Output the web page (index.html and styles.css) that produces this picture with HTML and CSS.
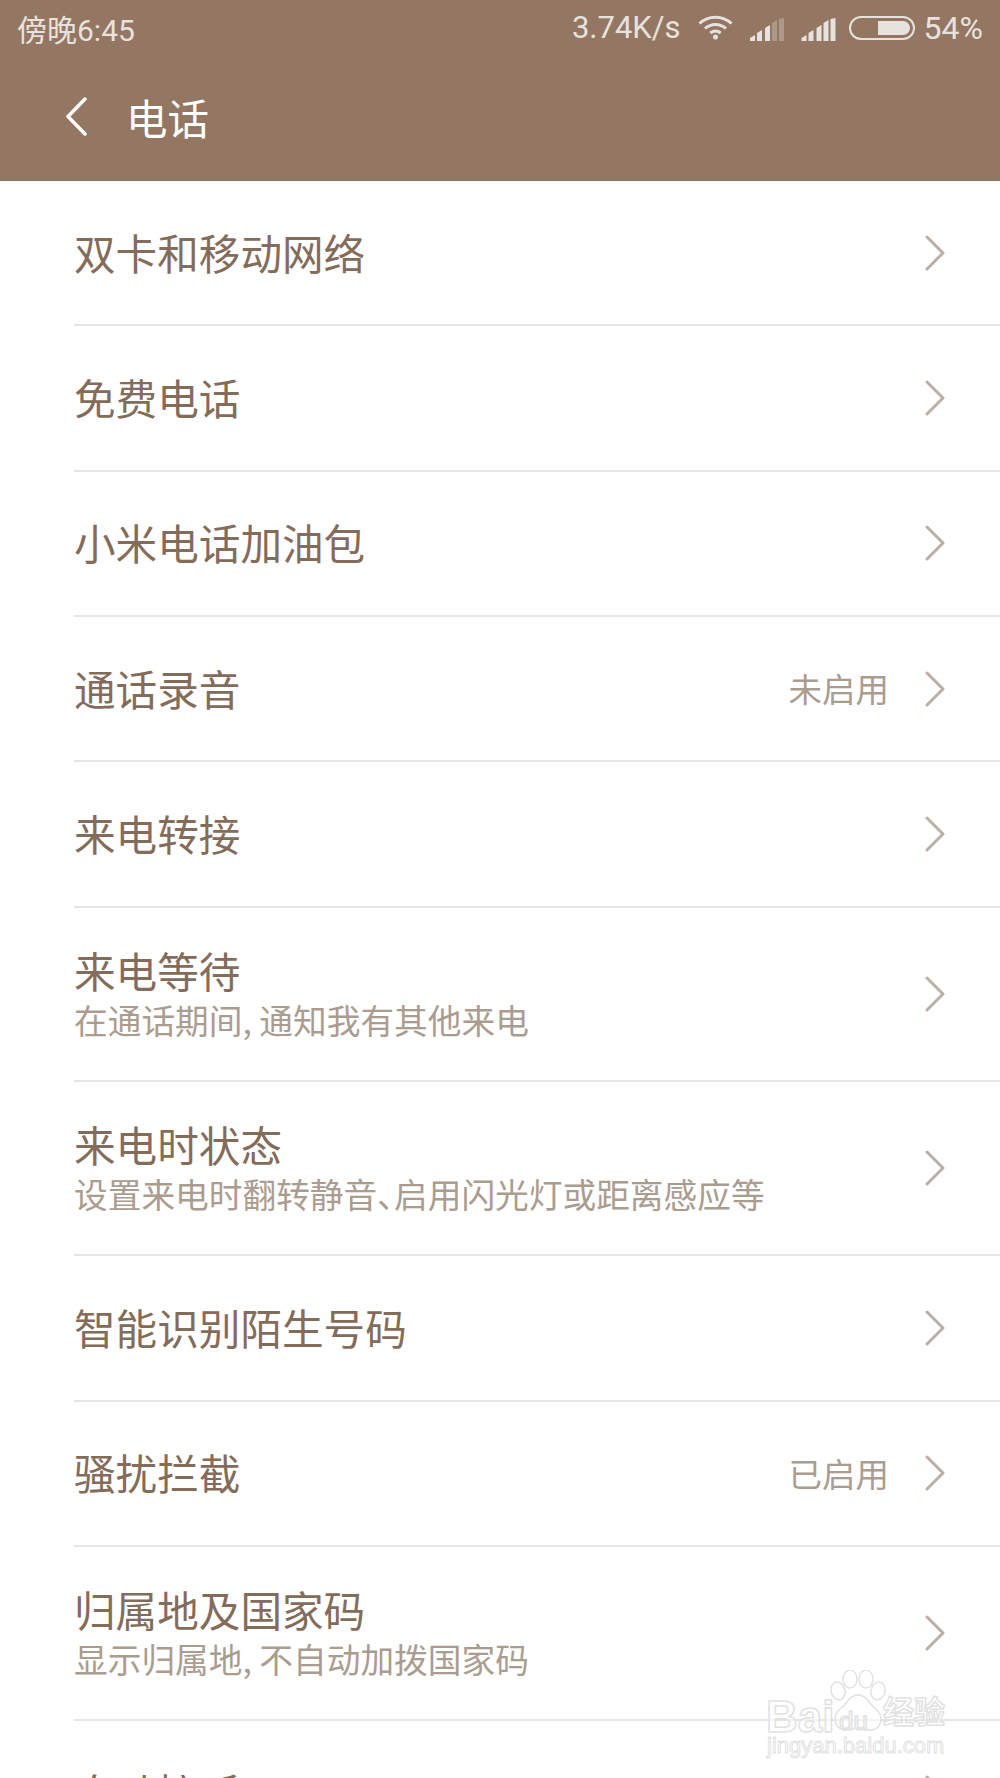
FILE: index.html
```html
<!DOCTYPE html>
<html lang="zh-CN">
<head>
    <meta charset="UTF-8">
    <title>电话</title>
    <link rel="stylesheet" href="styles.css">
</head>
<body>

<div class="screen">
    <header class="app-header">
        <div class="status-bar">
            <span class="clock">傍晚6:45</span>
            <div class="status-right">
                <span class="speed">3.74K/s</span>
                <svg class="wifi" width="35" height="25" viewBox="0 0 35 25" fill="none" stroke="#e8e2de" stroke-width="3">
                    <path d="M1.5 8.5C10.5 0 24.500 0 33.500 8.500"/>
                    <path d="M7 13.500C13 8 22 8 28 13.500"/>
                    <path d="M12.300 18C15.500 15.500 19.500 15.500 22.700 18"/>
                    <circle cx="17.500" cy="22" r="2.500" fill="#e8e2de" stroke="none"/>
                </svg>
                <svg class="signal" width="34" height="23" viewBox="0 0 34 23" fill="#e8e2de">
                    <path d="M0 23V20L5 17V23Z"/>
                    <path d="M7 23V15L12 12V23Z"/>
                    <path d="M15 23V10L20 7V23Z"/>
                    <path d="M22 23V5L27 2V23Z" opacity=".3"/>
                    <path d="M29 23V1L34 0V23Z" opacity=".3"/>
                </svg>
                <svg class="signal signal-full" width="35" height="23" viewBox="0 0 34 23" fill="#e8e2de">
                    <path d="M0 23V20L5 17V23Z"/>
                    <path d="M7 23V15L12 12V23Z"/>
                    <path d="M15 23V10L20 7V23Z"/>
                    <path d="M22 23V5L27 2V23Z"/>
                    <path d="M29 23V1L34 0V23Z"/>
                </svg>
                <div class="battery"><div class="battery-level"></div></div>
                <span class="percent">54%</span>
            </div>
        </div>
        <div class="title-bar">
            <svg class="back" width="22" height="39" viewBox="0 0 22 39" fill="none" stroke="#fff" stroke-width="3.500" stroke-linecap="round" stroke-linejoin="round">
                <path d="M20 2L3 19.500L20 37"/>
            </svg>
            <h1>电话</h1>
        </div>
    </header>

    <ul class="settings">
        <li class="row">
            <div class="row-text"><div class="row-title">双卡和移动网络</div></div>
            <svg class="chevron" width="20" height="36" viewBox="0 0 20 36"><path d="M2 2L18 18L2 34"/></svg>
        </li>
        <li class="row">
            <div class="row-text"><div class="row-title">免费电话</div></div>
            <svg class="chevron" width="20" height="36" viewBox="0 0 20 36"><path d="M2 2L18 18L2 34"/></svg>
        </li>
        <li class="row">
            <div class="row-text"><div class="row-title">小米电话加油包</div></div>
            <svg class="chevron" width="20" height="36" viewBox="0 0 20 36"><path d="M2 2L18 18L2 34"/></svg>
        </li>
        <li class="row">
            <div class="row-text"><div class="row-title">通话录音</div></div>
            <span class="row-value">未启用</span>
            <svg class="chevron" width="20" height="36" viewBox="0 0 20 36"><path d="M2 2L18 18L2 34"/></svg>
        </li>
        <li class="row">
            <div class="row-text"><div class="row-title">来电转接</div></div>
            <svg class="chevron" width="20" height="36" viewBox="0 0 20 36"><path d="M2 2L18 18L2 34"/></svg>
        </li>
        <li class="row row-tall">
            <div class="row-text">
                <div class="row-title">来电等待</div>
                <div class="row-sub">在通话期间, 通知我有其他来电</div>
            </div>
            <svg class="chevron" width="20" height="36" viewBox="0 0 20 36"><path d="M2 2L18 18L2 34"/></svg>
        </li>
        <li class="row row-tall">
            <div class="row-text">
                <div class="row-title">来电时状态</div>
                <div class="row-sub">设置来电时翻转静音、启用闪光灯或距离感应等</div>
            </div>
            <svg class="chevron" width="20" height="36" viewBox="0 0 20 36"><path d="M2 2L18 18L2 34"/></svg>
        </li>
        <li class="row">
            <div class="row-text"><div class="row-title">智能识别陌生号码</div></div>
            <svg class="chevron" width="20" height="36" viewBox="0 0 20 36"><path d="M2 2L18 18L2 34"/></svg>
        </li>
        <li class="row">
            <div class="row-text"><div class="row-title">骚扰拦截</div></div>
            <span class="row-value">已启用</span>
            <svg class="chevron" width="20" height="36" viewBox="0 0 20 36"><path d="M2 2L18 18L2 34"/></svg>
        </li>
        <li class="row row-tall">
            <div class="row-text">
                <div class="row-title">归属地及国家码</div>
                <div class="row-sub">显示归属地, 不自动加拨国家码</div>
            </div>
            <svg class="chevron" width="20" height="36" viewBox="0 0 20 36"><path d="M2 2L18 18L2 34"/></svg>
        </li>
        <li class="row">
            <div class="row-text"><div class="row-title">自动接听</div></div>
            <svg class="chevron" width="20" height="36" viewBox="0 0 20 36"><path d="M2 2L18 18L2 34"/></svg>
        </li>
    </ul>

    <div class="watermark">
        <span class="wm-bai">Bai</span>
        <svg class="wm-paw" width="58" height="62" viewBox="0 0 58 62" fill="#fff" fill-opacity=".5" stroke="#e2e2e2" stroke-width="1.500">
            <ellipse cx="9" cy="21" rx="7" ry="9" transform="rotate(-15 9 21)"/>
            <ellipse cx="21" cy="9" rx="7" ry="9"/>
            <ellipse cx="37" cy="9" rx="7" ry="9"/>
            <ellipse cx="49" cy="21" rx="7" ry="9" transform="rotate(15 49 21)"/>
            <path d="M29 25C38 25 39 33 47 39C55 46 53 59 42 60C36 60 33 58 29 58C25 58 22 60 16 60C5 59 3 46 11 39C19 33 20 25 29 25Z"/>
        </svg>
        <span class="wm-du">du</span>
        <span class="wm-jy">经验</span>
        <span class="wm-url">jingyan.baidu.com</span>
    </div>
</div>

</body>
</html>
```

FILE: styles.css
```css
* {
    box-sizing: border-box;
}
body {
    margin: 0;
    background: #fff;
    font-family: "Noto Sans CJK SC", "Noto Sans", sans-serif;
}
.screen {
    position: relative;
    width: 1000px;
    height: 1778px;
    overflow: hidden;
}

/* header */
.app-header {
    height: 181px;
    background-color: #937763;
}
.status-bar {
    display: flex;
    justify-content: space-between;
    align-items: center;
    height: 55px;
    padding: 0 17px 0 17px;
    color: #e8e2de;
    font-size: 31px;
    font-family: Roboto, "Noto Sans CJK SC", sans-serif;
}
.clock {
    font-size: 30px;
}
.status-right {
    display: flex;
    align-items: center;
}
.speed {
    margin-right: 17px;
}
.wifi {
    margin-right: 17px;
}
.signal {
    margin-right: 17px;
    margin-top: 3px;
}
.signal-full {
    margin-right: 13px;
}
.battery {
    display: flex;
    justify-content: flex-end;
    width: 66px;
    height: 24px;
    padding: 3px;
    margin-right: 9px;
    border: 2px solid #e8e2de;
    border-radius: 12px;
}
.battery-level {
    width: 32px;
    background-color: #e8e2de;
    border-radius: 0 8px 8px 0;
}
.percent {
    font-size: 32px;
}
.title-bar {
    display: flex;
    align-items: center;
    height: 126px;
    padding-left: 65px;
    padding-bottom: 3px;
}
.back {
    margin-right: 41px;
}
h1 {
    margin: 0;
    font-size: 41.5px;
    font-weight: 400;
    color: #fff;
    margin-left: -2px;
}

/* list */
.settings {
    list-style: none;
    margin: 0;
    padding: 0 0 0 74px;
}
.row {
    display: flex;
    align-items: center;
    height: 145.33px;
    padding-right: 55px;
    border-bottom: 2px solid #e6e6e6;
}
.row-tall {
    height: 174.3px;
}
.row-text {
    flex: 1;
    padding-bottom: 2px;
}
.row-title {
    font-size: 41.6px;
    line-height: 54px;
    color: #846c5b;
}
.row-sub {
    font-size: 33.7px;
    line-height: 46px;
    color: #ab9c90;
    font-feature-settings: "palt";
}
.row-value {
    margin-right: 36px;
    margin-bottom: 2px;
    font-size: 33.5px;
    color: #ab9c90;
}
.chevron {
    fill: none;
    stroke: #bbaea3;
    stroke-width: 3;
    stroke-linecap: round;
    stroke-linejoin: round;
}

/* watermark, sits over the list */
.watermark {
    position: absolute;
    left: 766px;
    top: 1670px;
    width: 190px;
    height: 90px;
    color: rgba(255, 255, 255, .5);
    -webkit-text-stroke: 1.5px #e2e2e2;
    font-family: "Liberation Sans", sans-serif;
}
.wm-bai {
    position: absolute;
    left: 0;
    top: 22px;
    font-size: 44px;
    font-weight: 700;
    line-height: 50px;
}
.wm-paw {
    position: absolute;
    left: 63px;
    top: 0;
}
.wm-du {
    position: absolute;
    left: 73px;
    top: 36px;
    font-size: 26px;
    line-height: 30px;
}
.wm-jy {
    position: absolute;
    left: 117px;
    top: 20px;
    font-size: 31px;
    line-height: 40px;
    font-family: "Noto Sans CJK SC", sans-serif;
    font-weight: 700;
}
.wm-url {
    position: absolute;
    left: 1px;
    top: 62px;
    font-size: 22px;
    line-height: 28px;
    -webkit-text-stroke-width: 1px;
    white-space: nowrap;
}
```
